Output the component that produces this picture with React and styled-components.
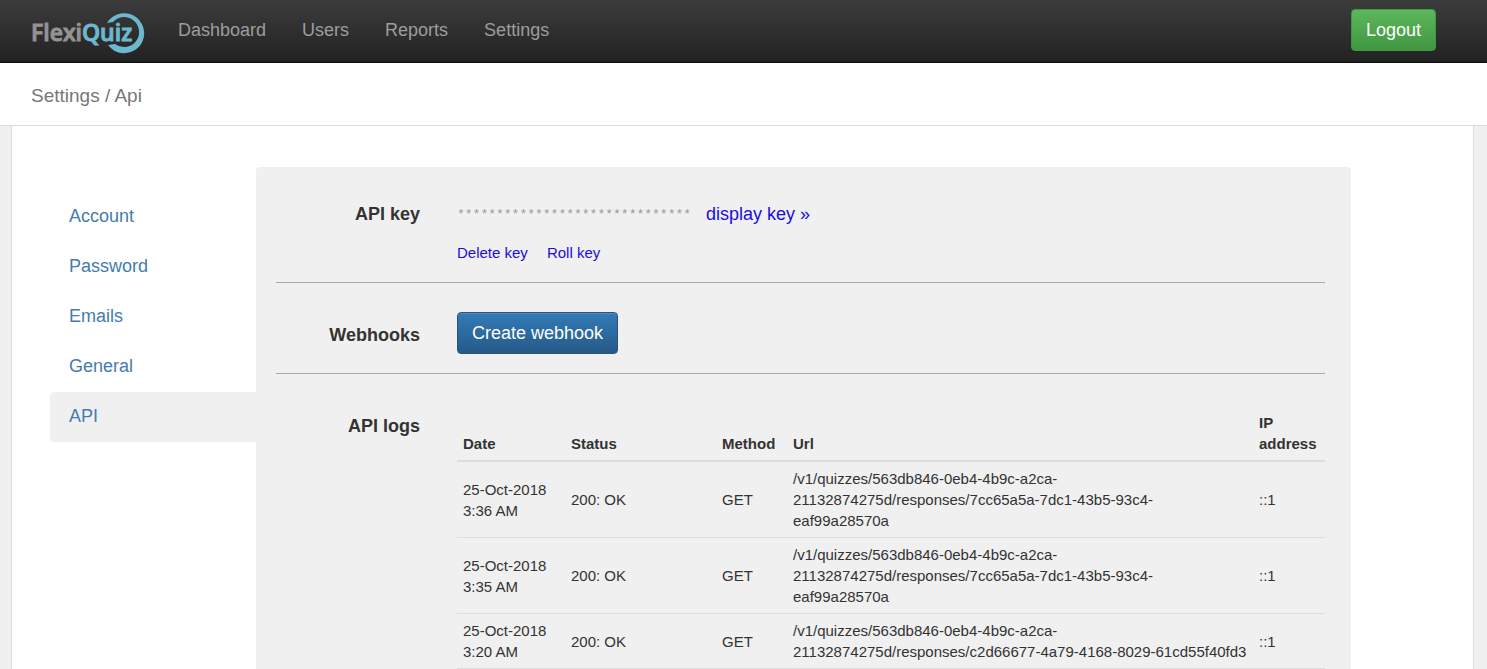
import React from "react";
import styled, { createGlobalStyle } from "styled-components";

const navLinks = ["Dashboard", "Users", "Reports", "Settings"];

const menuItems = ["Account", "Password", "Emails", "General", "API"];

const logs = [
  {
    day: "25-Oct-2018",
    time: "3:36 AM",
    status: "200: OK",
    method: "GET",
    url: "/v1/quizzes/563db846-0eb4-4b9c-a2ca-21132874275d/responses/7cc65a5a-7dc1-43b5-93c4-eaf99a28570a",
    ip: "::1",
  },
  {
    day: "25-Oct-2018",
    time: "3:35 AM",
    status: "200: OK",
    method: "GET",
    url: "/v1/quizzes/563db846-0eb4-4b9c-a2ca-21132874275d/responses/7cc65a5a-7dc1-43b5-93c4-eaf99a28570a",
    ip: "::1",
  },
  {
    day: "25-Oct-2018",
    time: "3:20 AM",
    status: "200: OK",
    method: "GET",
    url: "/v1/quizzes/563db846-0eb4-4b9c-a2ca-21132874275d/responses/c2d66677-4a79-4168-8029-61cd55f40fd3",
    ip: "::1",
  },
];

const Logo = () => (
  <svg width="116" height="44" viewBox="0 0 116 44" role="img" aria-label="FlexiQuiz">
    <path
      d="M76 13 A20 20 0 1 1 77 35 L84 34 A15 15 0 1 0 82 12 Z"
      fill="#6cb8cf"
    />
    <text
      x="0"
      y="31"
      fontFamily="'Open Sans', 'Noto Sans', sans-serif"
      fontSize="23"
      fontWeight="600"
      fill="#939393"
      stroke="#939393"
      strokeWidth="1"
    >
      Flexi
      <tspan fill="#6cb8cf" stroke="#6cb8cf">
        Quiz
      </tspan>
    </text>
  </svg>
);

const App = () => {
  return (
    <>
      <GlobalStyle />
      <Navbar>
        <LogoLink href="#">
          <Logo />
        </LogoLink>
        <NavList>
          {navLinks.map((name) => (
            <NavLink href="#" key={name}>
              {name}
            </NavLink>
          ))}
        </NavList>
        <LogoutButton>Logout</LogoutButton>
      </Navbar>
      <Breadcrumb>Settings / Api</Breadcrumb>
      <Container>
        <Menu>
          {menuItems.map((name) => (
            <MenuLink href="#" key={name} $active={name === "API"}>
              {name}
            </MenuLink>
          ))}
        </Menu>
        <Panel>
          <Section>
            <Label>API key</Label>
            <div>
              <KeyRow>
                <MaskedKey>{"*".repeat(30)}</MaskedKey>
                <DisplayLink href="#">display key »</DisplayLink>
              </KeyRow>
              <KeyActions>
                <ActionLink href="#">Delete key</ActionLink>
                <ActionLink href="#">Roll key</ActionLink>
              </KeyActions>
            </div>
          </Section>
          <Section>
            <Label $offset="12px">Webhooks</Label>
            <div>
              <WebhookButton>Create webhook</WebhookButton>
            </div>
          </Section>
          <Section>
            <Label $offset="12px">API logs</Label>
            <LogTable>
              <thead>
                <tr>
                  <Th $width="108px">Date</Th>
                  <Th $width="151px">Status</Th>
                  <Th $width="71px">Method</Th>
                  <Th>Url</Th>
                  <Th $width="72px">IP address</Th>
                </tr>
              </thead>
              <tbody>
                {logs.map((log) => (
                  <tr key={log.time}>
                    <Td>
                      {log.day} {log.time}
                    </Td>
                    <Td>{log.status}</Td>
                    <Td>{log.method}</Td>
                    <Td>{log.url}</Td>
                    <Td>{log.ip}</Td>
                  </tr>
                ))}
              </tbody>
            </LogTable>
          </Section>
        </Panel>
      </Container>
    </>
  );
};

const GlobalStyle = createGlobalStyle`
  * {
    box-sizing: border-box;
  }

  html {
    scrollbar-width: none;
  }

  body {
    margin: 0;
    background-color: #f0f0f0;
    color: #333;
    font-family: Arial, "Liberation Sans", sans-serif;
    font-size: 15px;
    line-height: 21px;
  }

  a {
    text-decoration: none;
  }
`;

const Navbar = styled.header`
  display: flex;
  align-items: center;
  height: 63px;
  padding: 0 51px 2px 31px;
  border-bottom: 1px solid #080808;
  background: linear-gradient(to bottom, #3c3c3c, #222);
`;

const LogoLink = styled.a`
  display: flex;
  padding-top: 3px;
`;

const NavList = styled.nav`
  display: flex;
  flex: 1;
  gap: 36px;
  margin-left: 31px;
`;

const NavLink = styled.a`
  color: #9d9d9d;
  font-size: 18px;
`;

const Button = styled.button`
  height: 42px;
  padding: 0 14px;
  border-radius: 4px;
  color: #fff;
  font-family: inherit;
  font-size: 18px;
  cursor: pointer;
`;

const LogoutButton = styled(Button)`
  border: 1px solid #419641;
  background: linear-gradient(to bottom, #5cb85c, #419641);
`;

const WebhookButton = styled(Button)`
  border: 1px solid #245580;
  background: linear-gradient(to bottom, #337ab7, #265a88);
  box-shadow: inset 0 1px 0 rgba(255, 255, 255, 0.15);
`;

const Breadcrumb = styled.div`
  height: 63px;
  padding: 22px 31px;
  border-bottom: 1px solid #ddd;
  background-color: #fff;
  color: #777;
  font-size: 19px;
`;

const Container = styled.main`
  display: flex;
  margin: 0 13px 0 11px;
  padding: 41px 122px 0 38px;
  border: solid #ddd;
  border-width: 0 1px;
  background-color: #fff;
`;

const Menu = styled.nav`
  width: 206px;
  padding-top: 25px;
`;

const MenuLink = styled.a`
  display: block;
  height: 50px;
  padding: 14px 19px;
  border-radius: 4px 0 0 4px;
  background-color: ${(props) => (props.$active ? "#f0f0f0" : "transparent")};
  color: #447bb0;
  font-size: 18px;
`;

const Panel = styled.div`
  flex: 1;
  min-width: 0;
  padding: 7px 26px 30px 20px;
  border-radius: 4px;
  background-color: #f0f0f0;
`;

const Section = styled.section`
  display: grid;
  grid-template-columns: 144px minmax(0, 1fr);
  column-gap: 37px;
  padding: 29px 0 19px;

  & + & {
    border-top: 1px solid #aaa;
  }
`;

const Label = styled.h2`
  margin: 1px 0 0;
  padding-top: ${(props) => props.$offset || "0"};
  font-size: 18px;
  line-height: 21px;
  text-align: right;
`;

const KeyRow = styled.div`
  display: flex;
  gap: 15px;
  padding-top: 1px;
`;

const MaskedKey = styled.span`
  color: #999;
  font-family: "Liberation Mono", monospace;
  font-size: 13px;
`;

const DisplayLink = styled.a`
  color: #1a0ddb;
  font-size: 18px;
`;

const KeyActions = styled.div`
  display: flex;
  gap: 19px;
  margin-top: 17px;
`;

const ActionLink = styled.a`
  color: #1a0ddb;
`;

const LogTable = styled.table`
  width: 100%;
  margin-top: 3px;
  table-layout: fixed;
  border-collapse: collapse;
`;

const Th = styled.th`
  width: ${(props) => props.$width || "auto"};
  padding: 6px;
  border-bottom: 2px solid #ddd;
  text-align: left;
  vertical-align: bottom;
`;

const Td = styled.td`
  padding: 6px;
  border-bottom: 1px solid #ddd;
  vertical-align: middle;
`;

export default App;
